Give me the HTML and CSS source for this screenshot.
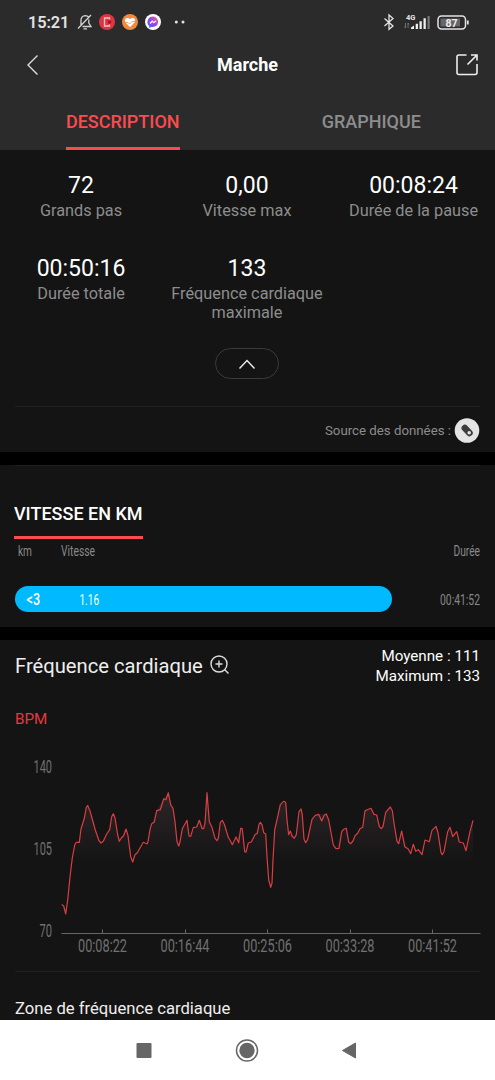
FILE: index.html
```html
<!DOCTYPE html>
<html lang="fr">
<head>
<meta charset="utf-8">
<title>Marche</title>
<link rel="stylesheet" href="styles.css">
</head>
<body>
<div class="screen">
  <header class="top">
    <div class="status">
      <span class="clock">15:21</span>
      <svg class="status-icons" width="110" height="20" viewBox="76 12 110 20">
        <g fill="none" stroke="#d4d4d4" stroke-width="1.3">
          <path d="M78 28.500 91 15M80.300 24.500 81 23.500V20Q81.300 16 85.300 15.600Q87.500 15.600 88.500 17M82.500 26.500H91L88.800 23V19.500M83.500 28.800H87"/>
        </g>
        <circle cx="107" cy="22" r="8" fill="#df3541"/>
        <path d="M109.500 19.500V18H104.500V26H109.500V24.500" fill="none" stroke="#f6c3c4" stroke-width="1.3"/><circle cx="109.500" cy="22" r="1.800" fill="#b00f2c"/>
        <circle cx="130" cy="22" r="8" fill="#f4883c"/>
        <path d="M130 27.200 125.500 22.500C123.500 19 127.500 16.500 130 19.200C132.500 16.500 137 19 134.500 22.500Z" fill="#fff"/>
        <path d="M125 22.500H128L129.500 24L132 21.500H135" fill="none" stroke="#f4883c" stroke-width=".7"/>
        <defs><linearGradient id="chat" x1="0" y1="1" x2="1" y2="0"><stop offset="0" stop-color="#2878ff"/><stop offset=".5" stop-color="#9b3ff4"/><stop offset="1" stop-color="#ff6370"/></linearGradient></defs>
        <circle cx="153" cy="22" r="8" fill="#fff"/>
        <path d="M153 16.500a5.700 5.300 0 1 1-1.500 10.500L149.200 28V26A5.500 5.500 0 0 1 153 16.500Z" fill="url(#chat)"/>
        <path d="M150 23.500 152.200 21.200 153.800 22.700 156 20.800" fill="none" stroke="#fff" stroke-width="1.300"/>
        <circle cx="176.300" cy="22" r="1.500" fill="#e4e4e4"/><circle cx="183" cy="22" r="1.500" fill="#e4e4e4"/>
      </svg>
      <svg class="signals" width="90" height="20" viewBox="380 12 90 20">
        <path d="M384.500 18.500 393 26 389 29.300V15L393 18.500 384.500 26" fill="none" stroke="#e4e4e4" stroke-width="1.300"/>
        <text x="406" y="19.800" class="net">4G</text>
        <path d="M405.500 23v5m-1.200-1.500 1.200 1.500M408 28v-5m0 0 1.200 1.500" stroke="#777" fill="none" stroke-width=".9"/>
        <path d="M411 29v-1.500l3-2V29zM415.700 23.800h2.300V29h-2.300zM419.500 21.300h2.300V29h-2.300zM423.500 18.300h2.300V29h-2.300z" fill="#eee"/><path d="M427.500 16h2.200v13h-2.200z" fill="#777"/>
        <rect x="438" y="16" width="27.500" height="13" rx="3.500" fill="none" stroke="#e4e4e4" stroke-width="1.500"/>
        <rect x="440.500" y="18.500" width="19.500" height="8" fill="#666"/>
        <path d="M467.800 20.500v4" stroke="#e4e4e4" stroke-width="1.800"/>
        <text x="451.500" y="26.600" class="charge">87</text>
      </svg>
    </div>
    <div class="titlebar">
      <svg class="back" width="14" height="22" viewBox="25 53 14 22"><path d="M37.500 54.500 28 64 37.500 73.500" fill="none" stroke="#ddd" stroke-width="1.400"/></svg>
      <h1>Marche</h1>
      <svg class="share" width="24" height="24" viewBox="455 52 24 24"><path d="M466.500 54H459Q457 54 457 56V71.500Q457 73.500 459 73.500H475Q477 73.500 477 71.500V63M471 54H477V59.500M477 54 467.500 63.500" fill="none" stroke="#eee" stroke-width="1.600"/></svg>
    </div>
    <nav class="tabs">
      <div class="tab"><span class="tab-label active">DESCRIPTION</span></div>
      <div class="tab"><span class="tab-label">GRAPHIQUE</span></div>
    </nav>
  </header>

  <section class="summary">
    <div class="stats">
      <div class="stat"><b>72</b><span>Grands pas</span></div>
      <div class="stat"><b>0,00</b><span>Vitesse max</span></div>
      <div class="stat"><b>00:08:24</b><span>Durée de la pause</span></div>
      <div class="stat"><b>00:50:16</b><span>Durée totale</span></div>
      <div class="stat"><b>133</b><span>Fréquence cardiaque<br>maximale</span></div>
    </div>
    <div class="collapse"><svg width="18" height="12" viewBox="0 0 18 12"><path d="M1.500 10.500 9 2.500 16.500 10.500" fill="none" stroke="#eee" stroke-width="1.400"/></svg></div>
    <div class="source">
      <span>Source des données :</span>
      <svg width="26" height="26" viewBox="0 0 26 26"><circle cx="13" cy="12.500" r="12.300" fill="#e4e4e4"/><path d="M10.800 10 15.500 15" stroke="#3c3c3c" stroke-width="6.500" stroke-linecap="round"/><circle cx="15.200" cy="14.700" r="1.800" fill="#e4e4e4"/></svg>
    </div>
  </section>

  <section class="pace">
    <h2>VITESSE EN KM</h2>
    <svg class="pace-head" width="495" height="20" viewBox="0 541 495 20">
      <text x="18" y="556" textLength="14" lengthAdjust="spacingAndGlyphs">km</text>
      <text x="61" y="556" textLength="34" lengthAdjust="spacingAndGlyphs">Vitesse</text>
      <text x="453.500" y="556" textLength="26.500" lengthAdjust="spacingAndGlyphs">Durée</text>
    </svg>
    <div class="pace-row">
      <div class="pace-bar">
        <svg width="377" height="26" viewBox="15 586 377 26">
          <text x="26.500" y="605" textLength="13.500" lengthAdjust="spacingAndGlyphs" class="strong">&lt;3</text>
          <text x="79.500" y="604.500" textLength="19.500" lengthAdjust="spacingAndGlyphs">1.16</text>
        </svg>
      </div>
      <svg class="pace-time" width="50" height="26" viewBox="435 586 50 26"><text x="440" y="604.500" textLength="40" lengthAdjust="spacingAndGlyphs">00:41:52</text></svg>
    </div>
  </section>

  <section class="heart">
    <div class="heart-head">
      <h3>Fréquence cardiaque</h3>
      <svg class="zoom" width="20" height="20" viewBox="0 0 20 20"><g fill="none" stroke="#ddd" stroke-width="1.400"><circle cx="9" cy="9" r="8"/><path d="M14.800 14.800 18.500 18.500M5.500 9h7M9 5.500v7"/></g></svg>
      <p class="totals">Moyenne : 111<br>Maximum : 133</p>
    </div>
    <div class="unit">BPM</div>
    <svg class="chart" width="495" height="220" viewBox="0 740 495 220">
      <defs><linearGradient id="fade" gradientUnits="userSpaceOnUse" x1="0" y1="790" x2="0" y2="862"><stop offset="0" stop-color="#30262a"/><stop offset="1" stop-color="#141414"/></linearGradient></defs>
      <g class="axis-text">
        <text x="33.500" y="772.500" textLength="18.500" lengthAdjust="spacingAndGlyphs">140</text>
        <text x="33.500" y="854.800" textLength="18.500" lengthAdjust="spacingAndGlyphs">105</text>
        <text x="39.500" y="937.300" textLength="12.500" lengthAdjust="spacingAndGlyphs">70</text>
        <text x="78" y="951.500" textLength="49" lengthAdjust="spacingAndGlyphs">00:08:22</text>
        <text x="160.500" y="951.500" textLength="49" lengthAdjust="spacingAndGlyphs">00:16:44</text>
        <text x="243" y="951.500" textLength="49" lengthAdjust="spacingAndGlyphs">00:25:06</text>
        <text x="325.500" y="951.500" textLength="49" lengthAdjust="spacingAndGlyphs">00:33:28</text>
        <text x="408" y="951.500" textLength="49" lengthAdjust="spacingAndGlyphs">00:41:52</text>
      </g>
      <path d="M61.500 933.500H480.500M102.500 929.500v4M185.500 929.500v4M267.500 929.500v4M350.500 929.500v4M432.500 929.500v4" stroke="#666" fill="none"/>
      <polygon fill="url(#fade)" points="72,862 74.700,845 79.300,842.300 81,829 87.700,805.500 95.300,830 101,843 109.700,829.700 113.300,813.700 119.300,841.300 126,829 132.700,862 137.300,852.700 147,844 151.700,823.700 156.700,810.700 163.700,798.700 168.300,792.700 173,808.300 178.700,846 182.300,828.700 187,820.300 190,836.300 196.500,827 199.300,820.300 203.700,828.700 207,792.700 209.300,821.700 217,840.700 222.300,820.300 232.300,844.700 242.300,828.700 246,852.300 260.300,822.300 265.700,834 270.700,887.300 274.700,830 280.300,804.700 285.700,802.300 288.700,834.700 296.300,834.700 301,809 305.700,842.700 312,819.300 318.700,814.300 326.300,814 336,848.700 341.700,831.700 346.300,828.300 350.700,843.700 362.700,827.300 365,810.700 371,808.300 381.300,828.700 385.700,812.300 390.300,807 398.700,843.700 401.700,831 410.700,853.700 422,854.700 436,826.300 442.300,854.700 450,827.300 459.300,842 466,850.700 473,820.300 473,862"/>
      <polyline class="pulse" points="61.700,904.500 63.700,906 65.700,914 67.700,900 70,877 72.300,858 74.700,845 76.300,842.300 79.300,842.300 81,829 84.300,818.300 86.300,807.300 87.700,805.500 90,811 95.300,830 99,840.700 101,843 103.300,841.300 106.700,834 109.700,829.700 111.700,816.700 113.300,813.700 115,817.700 117.700,835 119.300,841.300 121.300,838 123.700,835.700 126,829 128,835.700 130.700,856.700 132.700,862 135,854.700 137.300,852.700 143.300,842.300 147,844 148,842 150,829.300 151.700,823.700 154.300,822 156.700,810.700 160.300,809.700 163.700,798.700 166,799.700 168.300,792.700 170.700,805 173,808.300 175,821.700 177,841.700 178.700,846 180,842 182.300,828.700 187,820.300 189,836 190.700,836.300 193.300,827.700 196.700,827 199.300,820.300 202,828.300 203.700,828.700 205,823 207,792.700 209.300,821.700 212,827.300 215,838.300 217,840.700 218.300,838.300 220.300,822.700 222.300,820.300 224.300,824.300 228.300,837.300 230.300,840.700 232.300,844.700 236,837 238.700,842.700 240.700,828.300 242.300,828.700 244.700,851.700 246,852.300 248.300,843 251.300,842 255,834.700 257.300,833.300 259,824.300 260.300,822.300 262,824.700 263.700,832.700 265.700,834 267,856.700 268.700,880 270.700,887.300 272,883 273,860 274.700,830 277.300,818.300 280.300,804.700 283.700,801.300 285.700,802.300 287,820 288.700,834.700 290.300,831 292,836 294.300,838.300 296.300,834.700 299,811.700 301,809 302.300,815 304,839.300 305.700,842.700 307.700,839.300 312,819.300 315.300,815.300 318.700,814.300 321.700,821 324.300,815.300 326.300,814 328.700,820 333.300,845 336,848.700 339,848.300 341.700,831.700 343.700,829.300 346.300,828.300 348.700,842.300 350.700,843.700 353,841 355,835.700 357.700,833.300 360,828.700 362.700,827.300 365,810.700 368.300,809.300 371,808.300 374,814.300 376.700,815 379.300,826.700 381.300,828.700 383,826.700 385.700,812.300 390.300,807 392.300,810.700 394.300,825 397,841.300 398.700,843.700 401.700,831 404.700,846.700 408.300,849 410.700,853.700 413.300,844.300 415.700,851.300 418.300,849.700 422,854.700 425,840 429.300,841.700 432,830.300 436,826.300 438,832.700 441,852.700 442.300,854.700 444,851.700 447.700,831.700 450,827.300 452.700,836.700 456.700,831.700 459.300,842 463.300,843 466,850.700 470,831.700 473,820.300"/>
    </svg>
    <h4>Zone de fréquence cardiaque</h4>
  </section>

  <nav class="system">
    <svg width="495" height="60" viewBox="0 1020 495 60"><rect x="136.500" y="1043" width="15" height="15" rx="1" fill="#666"/><circle cx="247" cy="1050.500" r="10.500" fill="none" stroke="#666" stroke-width="1.500"/><circle cx="247" cy="1050.500" r="7.700" fill="#666"/><path d="M342.500 1050.500 355.500 1043V1058Z" fill="#666" stroke="#666" stroke-linejoin="round"/></svg>
  </nav>
</div>
</body>
</html>
```
FILE: styles.css
```css
* { box-sizing: border-box; }
body { margin: 0; background: #000; font-family: Roboto, "Liberation Sans", sans-serif; color: #fff; }
svg { display: block; flex: none; }
h1, h2, h3, h4, p { margin: 0; font-weight: 400; }
.screen { width: 495px; height: 1080px; overflow: hidden; display: flex; flex-direction: column; background: #000; }
.top { height: 150px; flex: none; background: #2b2b2b; }
.status { height: 44px; padding: 12px 25px 0 28px; display: flex; }
.clock { width: 48px; font-size: 16.300px; line-height: 21px; font-weight: 600; color: #e2e2e2; letter-spacing: -.1px; }
.signals { margin-left: auto; }
.net { font-size: 7.500px; font-weight: 700; fill: #e4e4e4; }
.charge { font-size: 10.500px; font-weight: 700; fill: #eee; text-anchor: middle; }
.titlebar { height: 42px; padding: 0 16px 0 25px; display: grid; grid-template-columns: 15px 1fr 24px; align-items: center; }
.titlebar h1 { font-size: 18px; font-weight: 700; text-align: center; line-height: 42px; }
.tabs { height: 64px; display: grid; grid-template-columns: 1fr 1fr; padding-top: 18px; }
.tab { display: flex; justify-content: center; }
.tab:first-child { padding-right: 2px; }
.tab-label { height: 46px; font-size: 18px; line-height: 36px; font-weight: 500; color: #8d8d8d; }
.tab-label.active { color: #fb4b4f; border-bottom: 3px solid #fb4b4f; }
.summary { height: 302px; flex: none; background: #141414; }
.stats { height: 198px; padding: 22px 0 0; display: grid; grid-template-columns: 162px 170px 163px; grid-template-rows: 83px 93px; }
.stat { display: flex; flex-direction: column; align-items: center; text-align: center; }
.stat b { font-size: 23px; line-height: 27px; font-weight: 400; }
.stat span { margin-top: 2px; font-size: 16.300px; line-height: 19px; color: #8d8d8d; white-space: nowrap; }
.collapse { width: 64px; height: 31px; margin: 0 auto 0 215px; display: flex; align-items: center; justify-content: center; border: 1.500px solid #3b3b3b; border-radius: 16px; }
.source { height: 48px; margin: 27px 15px 0; border-top: 1px solid #202020; display: flex; align-items: center; justify-content: flex-end; gap: 3px; font-size: 13.250px; color: #8d8d8d; }
.pace { height: 162px; margin-top: 13px; flex: none; background: #141414; }
.pace::before { content: ""; display: block; height: 1px; margin: 0 15px; background: #202020; }
.pace h2 { width: 129px; height: 73px; margin-left: 14px; padding-top: 34px; border-bottom: 3px solid #fb4b4f; font-size: 18px; line-height: 27px; font-weight: 500; white-space: nowrap; }
.pace-head { margin-top: 2px; }
.pace-head text, .pace-time text { font-size: 14.500px; fill: #888; }
.pace-row { margin: 25px 10px 0 15px; display: flex; justify-content: space-between; }
.pace-bar { width: 377px; height: 26px; border-radius: 13px; background: #00b9ff; }
.pace-bar text { font-size: 15px; fill: #fff; }
.pace-bar .strong { font-weight: 500; font-size: 16px; }
.heart { height: 380px; margin-top: 13px; flex: none; background: #141414; }
.heart-head { height: 60px; padding: 0 15px; display: flex; }
.heart-head h3 { padding-top: 13px; width: 189px; font-size: 20.200px; line-height: 26px; color: #eee; white-space: nowrap; }
.zoom { margin: 15px 0 0 6px; }
.totals { margin-left: auto; padding-top: 6px; font-size: 15.200px; line-height: 20px; text-align: right; }
.unit { height: 40px; padding: 9px 15px; font-size: 15.200px; line-height: 20px; color: #e5393f; }
.axis-text text { font-size: 17.500px; fill: #707070; }
.pulse { fill: none; stroke: #d83f42; stroke-width: 1.200; stroke-linejoin: round; }
.heart h4 { margin: 11px 15px 0; padding-top: 25px; border-top: 1px solid #202020; font-size: 16.650px; line-height: 24px; color: #eee; }
.system { height: 60px; flex: none; background: #fff; }
```
